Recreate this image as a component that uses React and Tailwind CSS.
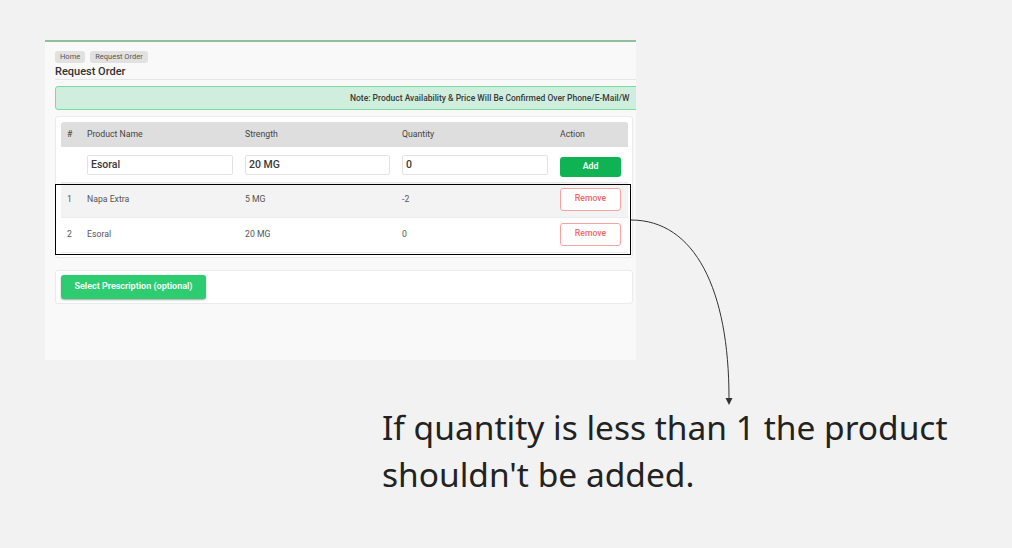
import React from 'react'

const rows = [
  { id: 1, name: 'Napa Extra', strength: '5 MG', qty: '-2', bg: 'bg-[#f3f3f3]' },
  { id: 2, name: 'Esoral', strength: '20 MG', qty: '0', bg: 'bg-white' },
]

const cols = 'grid grid-cols-[20px_158px_157px_158px_1fr]'

export default function App() {
  return (
    <div className="relative w-[1012px] h-[548px] overflow-hidden bg-[#f2f2f2] pt-[40px] font-['Roboto',sans-serif]">
      {/* screenshot panel */}
      <div className="ml-[45px] w-[591px] h-[320px] overflow-hidden bg-[#f9f9f9] border-t-2 border-[#8fbf9c] pl-[10px] pr-[3px]">
        <div className="flex gap-[5px] mt-[9px]">
          <span className="h-[12px] px-[5px] rounded-[3px] bg-[#e1e1e1] text-[7.5px] leading-[12px] text-[#555]">Home</span>
          <span className="h-[12px] px-[5px] rounded-[3px] bg-[#e1e1e1] text-[7.5px] leading-[12px] text-[#555]">Request Order</span>
        </div>
        <h1 className="mt-[2px] text-[11px] leading-[14px] font-medium text-[#333]">Request Order</h1>
        <div className="h-px bg-[#e6e6e6] -mr-[3px]" />

        <div className="mt-[6px] h-[24px] -mr-[10px] rounded-l-[3px] border border-[#78dca0] bg-[#cfeedd] pl-[294px] flex items-center whitespace-nowrap">
          <span className="text-[8.5px] font-medium text-[#3a3a3a]">
            Note: Product Availability &amp; Price Will Be Confirmed Over Phone/E-Mail/W
          </span>
        </div>

        {/* products card */}
        <div className="mt-[6px] h-[142px] bg-white border border-[#ebebeb] rounded-[3px] pt-[5px] pl-[5px] pr-[4px]">
          <div className={`${cols} h-[25px] items-center bg-[#dedede] rounded-t-[3px] text-[8.7px] text-[#444]`}>
            <span className="px-[6px]">#</span>
            <span className="px-[6px]">Product Name</span>
            <span className="px-[6px]">Strength</span>
            <span className="px-[6px]">Quantity</span>
            <span className="px-[6px]">Action</span>
          </div>
          <div className={`${cols} h-[36px] items-center border-b border-[#e8e8e8]`}>
            <span />
            {['Esoral', '20 MG', '0'].map((v) => (
              <div key={v} className="px-[6px]">
                <div className="h-[20px] border border-[#e3e3e3] rounded-[2px] pl-[3px] flex items-center text-[10.5px] font-medium text-[#3a3a3a]">
                  {v}
                </div>
              </div>
            ))}
            <div className="px-[6px]">
              <button className="w-[61px] h-[20px] rounded-[3px] bg-[#10b353] text-white text-[8.7px] font-semibold">Add</button>
            </div>
          </div>
          {rows.map((r) => (
            <div key={r.id} className={`${cols} h-[35px] items-center border-b border-[#ececec] text-[8.7px] text-[#555] ${r.bg}`}>
              <span className="px-[6px]">{r.id}</span>
              <span className="px-[6px]">{r.name}</span>
              <span className="px-[6px]">{r.strength}</span>
              <span className="px-[6px]">{r.qty}</span>
              <div className="px-[6px]">
                <button className="w-[61px] h-[23px] -mt-[2px] rounded-[3px] border border-[#f7a3a3] bg-white text-[#f06a6a] text-[8.7px] font-medium">Remove</button>
              </div>
            </div>
          ))}
        </div>

        {/* prescription card */}
        <div className="mt-[12px] h-[34px] bg-white border border-[#ebebeb] rounded-[3px] pl-[5px] flex items-center">
          <button className="w-[145px] h-[24px] rounded-[3px] bg-[#2ecc71] text-white text-[9px] font-semibold shadow-[0_1px_2px_rgba(0,0,0,0.35)]">
            Select Prescription (optional)
          </button>
        </div>
      </div>

      {/* annotation */}
      <p className="ml-[382px] mt-[44px] text-[33.5px] leading-[47px] text-[#222] font-['Noto_Sans',sans-serif]">
        If quantity is less than 1 the product
        <br />
        shouldn't be added.
      </p>

      <div className="absolute left-[55px] top-[184px] w-[576px] h-[71px] border border-black" />
      <svg className="absolute left-0 top-0" width="1012" height="548" viewBox="0 0 1012 548">
        <path d="M631 220 C 695 220, 729 290, 729 398" fill="none" stroke="#333" strokeWidth="1" />
        <path d="M725.5 398 L732.5 398 L729 405 Z" fill="#333" />
      </svg>
    </div>
  )
}
